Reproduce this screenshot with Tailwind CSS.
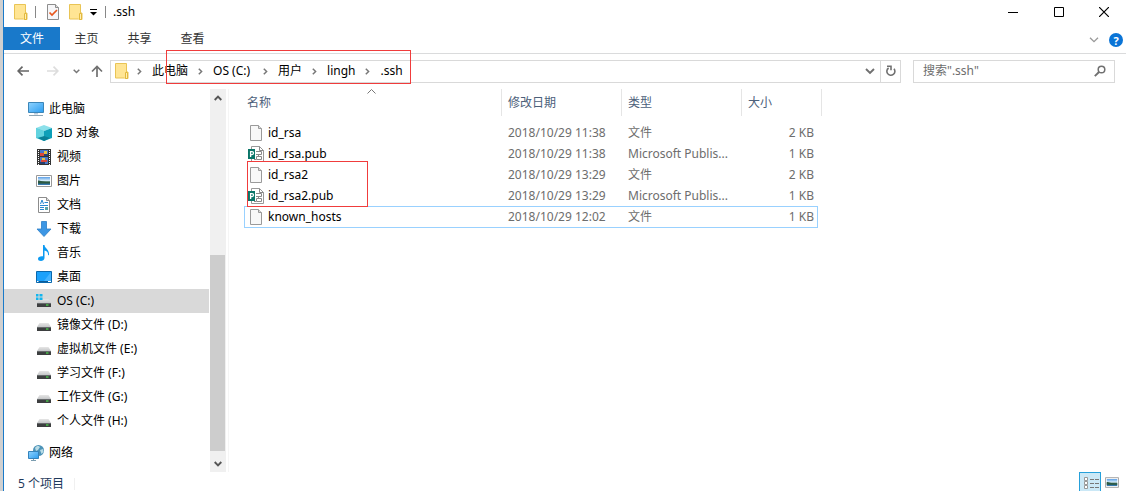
<!DOCTYPE html>
<html lang="zh-CN">
<head>
<meta charset="utf-8">
<title>.ssh</title>
<script src="https://cdn.jsdelivr.net/npm/@tailwindcss/browser@4"></script>
</head>
<body class="bg-white font-['Noto_Sans','Noto_Sans_CJK_SC',sans-serif] text-xs text-black">
<svg class="absolute size-0" aria-hidden="true">
  <linearGradient id="metal" x1="0" y1="0" x2="0" y2="1"><stop offset="0" stop-color="#e6e6e6"/><stop offset="1" stop-color="#c4c6c8"/></linearGradient>
  <linearGradient id="screen" x1="0" y1="0" x2="1" y2="1"><stop offset="0" stop-color="#8fd3ff"/><stop offset="1" stop-color="#2b9df0"/></linearGradient>
  <linearGradient id="sky" x1="0" y1="0" x2="0" y2="1"><stop offset="0" stop-color="#5b9ee6"/><stop offset=".45" stop-color="#d5ecfa"/><stop offset=".6" stop-color="#3a6a52"/><stop offset=".8" stop-color="#2d6d8c"/><stop offset="1" stop-color="#3d7fc0"/></linearGradient>
  <symbol id="folder" viewBox="0 0 14 16"><path d="M.5.5h11v8.500h1.500v6.500H10l-.5-.5h-9z" fill="#ffe594" stroke="#e9c455"/><path d="M10.500 9.500h2v6h-2z" fill="#fff0b5" stroke="#e3b93e"/></symbol>
  <symbol id="chev" viewBox="0 0 5 7"><path d="M.8.7 3.600 3.500.8 6.300" fill="none" stroke="#777" stroke-width="1.500"/></symbol>
  <symbol id="drive" viewBox="0 0 16 16"><path d="M3.500 6h9L15 10H1z" fill="url(#metal)"/><path d="M1 10h14v4H1z" fill="#3d3f40"/><path d="M1 10h14v1H1z" fill="#66696b"/><path d="M10 11.500h2.500v1H10z" fill="#4dff4d"/></symbol>
  <symbol id="page" viewBox="0 0 12 16"><path d="M.5.5h8l3 3v12H.5z" fill="#f8f8f8" stroke="#9a9a9a"/><path d="M8.500.5v3h3" fill="#ddd" stroke="#9a9a9a"/></symbol>
  <symbol id="pub" viewBox="0 0 16 16"><path d="M3.500.5h8l4 4v11h-12z" fill="#fff" stroke="#999"/><path d="M11.500.5v4h4M8 5.500h5.500v3H8M10.500 8.500v2M8.500 10.500H13.500v3h-5zM8 13.500H6" fill="none" stroke="#8a8a8a"/><path d="M0 3h7v10H0z" fill="#0a7568"/><path d="M2.600 11V5.600H4a1.300 1.300 0 0 1 0 3H2.600" fill="none" stroke="#fff" stroke-width="1.300"/></symbol>
  <symbol id="photo" viewBox="0 0 16 12"><path d="M.5.5h15v11H.5z" fill="#fff" stroke="#999"/><path d="M2 2h12v8H2z" fill="url(#sky)"/><path d="M2 5.500c3 0 5 2 12 1.500v1.500H2z" fill="#2c5943"/></symbol>
</svg>
<div class="flex min-h-screen border-l-[3px] border-[#d0d0d0]">
<div class="flex min-w-0 flex-1 flex-col border-l border-[#1a7ac9]">
  <header class="flex h-[27px] items-center pb-1 pl-[10px]">
    <svg class="h-4 w-[14px]"><use href="#folder"/></svg>
    <span class="ml-[7px] h-3 w-px bg-[#888]"></span>
    <button aria-label="属性" class="ml-[11px]"><svg class="block h-4 w-3" viewBox="0 0 12 16"><path d="M.5.5h8l3 3v12H.5z" fill="#f6f6f8" stroke="#8d8d8d"/><path d="M8.500.5v3h3" fill="#ddd" stroke="#8d8d8d"/><path d="m2.500 8.500 2.500 2.500 5-5" fill="none" stroke="#e8561c" stroke-width="1.700"/></svg></button>
    <button aria-label="新建文件夹" class="ml-[10px]"><svg class="block h-4 w-[14px]"><use href="#folder"/></svg></button>
    <button aria-label="自定义快速访问工具栏" class="ml-[7px]"><svg class="block h-2 w-[7px]" viewBox="0 0 7 8"><path d="M0 1.500h7" stroke="#000"/><path d="M0 4h7L3.500 7.500z"/></svg></button>
    <span class="ml-2 h-3 w-px bg-[#888]"></span>
    <h1 class="ml-[7px]">.ssh</h1>
    <div class="ml-auto flex h-full pr-[-1px]">
      <button aria-label="最小化" class="flex w-[46px] items-center justify-center"><svg class="h-[10px] w-[10px]" viewBox="0 0 10 10"><path d="M0 5.500h10" stroke="#000"/></svg></button>
      <button aria-label="最大化" class="flex w-[46px] items-center justify-center"><svg class="h-[10px] w-[10px]" viewBox="0 0 10 10"><path d="M.5.5h9v9h-9z" fill="none" stroke="#000"/></svg></button>
      <button aria-label="关闭" class="flex w-11 items-center justify-center"><svg class="h-[10px] w-[10px]" viewBox="0 0 10 10"><path d="m0 0 10 10M10 0 0 10" stroke="#000" stroke-width="1.200"/></svg></button>
    </div>
  </header>
  <nav class="flex h-[27px] items-start border-b border-[#dadbdc] text-[#333]">
    <button class="h-[23px] w-14 bg-[#1979ca] text-white">文件</button>
    <button class="h-6 w-[53px]">主页</button>
    <button class="h-6 w-[53px]">共享</button>
    <button class="h-6 w-[53px]">查看</button>
    <div class="ml-auto flex h-[26px] items-center gap-[10px] pr-[3px]">
      <button aria-label="展开功能区"><svg class="block h-[6px] w-[10px]" viewBox="0 0 10 6"><path d="m1 .7 4 4 4-4" fill="none" stroke="#999" stroke-width="1.300"/></svg></button>
      <button aria-label="帮助" class="flex size-[14px] items-center justify-center rounded-full bg-[#0a74d6] text-[11px] leading-none font-bold text-white">?</button>
    </div>
  </nav>
  <div class="relative flex h-[35px] items-center pr-[11px] pb-px pl-[13px]">
    <button aria-label="后退"><svg class="block h-[10px] w-3" viewBox="0 0 12 10"><path d="M12 5H1.500M5.500.7 1.200 5l4.300 4.300" fill="none" stroke="#666" stroke-width="1.700"/></svg></button>
    <button aria-label="前进" class="ml-[18px]"><svg class="block h-[10px] w-3" viewBox="0 0 12 10"><path d="M0 5h10.500M6.500.7 10.800 5 6.500 9.300" fill="none" stroke="#ddd" stroke-width="1.700"/></svg></button>
    <button aria-label="最近位置" class="ml-[14px]"><svg class="block h-[5px] w-[7px]" viewBox="0 0 7 5"><path d="m.7.7 2.800 2.800L6.300.7" fill="none" stroke="#777" stroke-width="1.500"/></svg></button>
    <button aria-label="向上" class="ml-[11px]"><svg class="block h-3 w-3" viewBox="0 0 12 12"><path d="M6 12V1.500M1 6.500 6 1.500l5 5" fill="none" stroke="#707070" stroke-width="1.700"/></svg></button>
    <div class="ml-[7px] flex h-[23px] min-w-0 flex-1 items-center border border-[#d9d9d9] pl-1">
      <svg class="h-4 w-[14px]"><use href="#folder"/></svg>
      <svg class="ml-2 h-[7px] w-[5px]"><use href="#chev"/></svg>
      <a href="#" class="ml-[10px]">此电脑</a>
      <svg class="mx-[10px] h-[7px] w-[5px]"><use href="#chev"/></svg>
      <a href="#" class="min-w-10">OS (C:)</a>
      <svg class="mx-[10px] h-[7px] w-[5px]"><use href="#chev"/></svg>
      <a href="#">用户</a>
      <svg class="mx-[10px] h-[7px] w-[5px]"><use href="#chev"/></svg>
      <a href="#">lingh</a>
      <svg class="mx-[10px] h-[7px] w-[5px]"><use href="#chev"/></svg>
      <a href="#">.ssh</a>
      <button aria-label="历史" class="ml-auto flex h-full w-5 items-center justify-center"><svg class="h-[7px] w-[10px]" viewBox="0 0 10 7"><path d="m1 1 4 4 4-4" fill="none" stroke="#707070" stroke-width="1.900"/></svg></button>
      <button aria-label="刷新" class="flex h-full w-5 items-center justify-center border-l border-[#d9d9d9]"><svg class="h-3 w-[10px]" viewBox="0 0 10 12"><path d="M2.600 3A4 4 0 1 0 8 3.800M1 1.300h4v4" fill="none" stroke="#707070" stroke-width="1.600"/></svg></button>
    </div>
    <label class="ml-3 flex h-[23px] w-[202px] items-center border border-[#d9d9d9] pr-2 pl-[9px]">
      <input type="search" aria-label="搜索" placeholder='搜索".ssh"' class="min-w-0 flex-1 outline-none placeholder:text-[#6d6d6d]">
      <svg class="h-3 w-3" viewBox="0 0 12 12"><circle cx="7.500" cy="4.500" r="3.300" fill="none" stroke="#707070" stroke-width="1.500"/><path d="M5 7 .8 11.200" stroke="#707070" stroke-width="1.900"/></svg>
    </label>
    <div class="absolute -top-1 left-[162px] h-[34px] w-[245px] border border-[#f03c3c]"></div>
  </div>
  <main class="flex flex-1">
    <aside class="w-[205px] shrink-0 pt-2">
      <ul class="leading-6 *:flex *:h-6 *:items-center *:gap-[5px] *:pl-8">
        <li class="pl-6!"><svg class="size-4" viewBox="0 0 16 16"><path d="M.5 1.500h15v10H.5z" fill="url(#screen)" stroke="#3c86b8"/><path d="M6 12h4v1.500H6z" fill="#bcd"/><path d="M1 14.500h14" stroke="#8ea6b5"/></svg><a href="#">此电脑</a></li>
        <li><svg class="size-4" viewBox="0 0 16 16"><path d="m0 3 8-3 8 3-8 3z" fill="#8ce0ea"/><path d="m0 3 8 3v10l-8-3z" fill="#36b9cb"/><path d="m16 3-8 3v10l8-3z" fill="#0d9fb8"/><path d="m2 13 6-2 6 2-6 3z" fill="#087f96"/><path d="m0 3 8 3v5l-8 2z" fill="#62d3df"/></svg><a href="#">3D 对象</a></li>
        <li><svg class="size-4" viewBox="0 0 16 16"><path d="M1 0h14v16H1z" fill="#333"/><path d="M4 1h8v6H4zM4 8h8v7H4z" fill="#4877c8"/><path d="M4 4h4v3H4zM5 11h6v2H5z" fill="#d9483b"/><path d="M8 2h3v3H8zM6 9h3v2H6z" fill="#e6c342"/><path d="M8 5h4v2H8zM4 13h5v2H4z" fill="#263f70"/><path d="M2.500 1v15M13.500 1v15" stroke="#fff" stroke-dasharray="1 1"/></svg><a href="#">视频</a></li>
        <li><svg class="h-3 w-4"><use href="#photo"/></svg><a href="#">图片</a></li>
        <li><svg class="size-4" viewBox="0 0 16 16"><path d="M2.500.5h8l3 3v12h-11z" fill="#fff" stroke="#8c8c8c"/><path d="M10.500.5v3h3" fill="#ddd" stroke="#8c8c8c"/><path d="m4.500 7 1.500-4 1.500 4M8.500 5.500H12M4 8.500h8M4 10.500h4M4 12.500h4" fill="none" stroke="#2a88d0"/><path d="M9 10h3v3H9z" fill="#58a3a8"/></svg><a href="#">文档</a></li>
        <li><svg class="size-4" viewBox="0 0 16 16"><path d="M5.500.5h5V8h4.500l-7 7.500L1 8h4.500z" fill="#3c96e4" stroke="#2b7fc8" stroke-width=".8"/></svg><a href="#">下载</a></li>
        <li><svg class="size-4" viewBox="0 0 16 16"><path d="M7 0h1.500c.3 3.500 5 4.500 4.500 10-.6.5-1 0-1-.5.200-2-1.200-3.500-3.500-4v7.500C8.500 15 6.500 16 5 16c-2 0-3-1-3-2.300C2 12 4 11 7 11.300z" fill="#0c9af2"/></svg><a href="#">音乐</a></li>
        <li><svg class="size-4" viewBox="0 0 16 16"><path d="M.5 2.500h15v11H.5z" fill="#1ba1fb" stroke="#0a68ad"/><path d="M8 12 15 3v9z" fill="#43b3ff"/><path d="M1 12.500h14" stroke="#0c5c99"/><path d="M1 12.500h1.500M12 12.500h3" stroke="#fff"/></svg><a href="#">桌面</a></li>
        <li class="bg-[#d9d9d9]" aria-current="true"><svg class="size-4" viewBox="0 0 16 16"><path d="M6 6h6.500L15 10H1l1.500-2.500H6z" fill="url(#metal)"/><path d="M1 10h14v4H1z" fill="#3d3f40"/><path d="M1 10h14v1H1z" fill="#66696b"/><path d="M10 11.500h2.500v1H10z" fill="#4dff4d"/><path d="M0 1h2.500v2.500H0zM3.500 1h3v2.500h-3zM0 4.500h2.500V7H0zM3.500 4.500h3V7h-3z" fill="#13b5ee"/></svg><a href="#">OS (C:)</a></li>
        <li><svg class="size-4"><use href="#drive"/></svg><a href="#">镜像文件 (D:)</a></li>
        <li><svg class="size-4"><use href="#drive"/></svg><a href="#">虚拟机文件 (E:)</a></li>
        <li><svg class="size-4"><use href="#drive"/></svg><a href="#">学习文件 (F:)</a></li>
        <li><svg class="size-4"><use href="#drive"/></svg><a href="#">工作文件 (G:)</a></li>
        <li><svg class="size-4"><use href="#drive"/></svg><a href="#">个人文件 (H:)</a></li>
        <li class="mt-2 pl-6!"><svg class="size-4" viewBox="0 0 16 16"><circle cx="10.500" cy="5.500" r="5.500" fill="#4d93b8"/><path d="M7 3c2-3 4-2 5-1l-2 3-2 1zM12 5l3-1 .5 3-2 2z" fill="#b9dce6"/><path d="M.5 6.500h10v7H.5z" fill="url(#screen)" stroke="#3483bb"/><path d="M3 15.500h5M5.500 14v1" stroke="#7c9db0"/></svg><a href="#">网络</a></li>
      </ul>
    </aside>
    <div class="ml-px flex w-4 shrink-0 flex-col bg-[#f0f0f0]">
      <button aria-label="向上滚动" class="flex h-[18px] items-center justify-center"><svg class="h-[6px] w-2" viewBox="0 0 8 6"><path d="m.7 5 3.300-3.300L7.300 5" fill="none" stroke="#555" stroke-width="1.900"/></svg></button>
      <div class="flex-1"></div>
      <div class="mr-px h-[196px] bg-[#cdcdcd]"></div>
      <button aria-label="向下滚动" class="flex h-[21px] items-center justify-center pt-1"><svg class="h-[6px] w-2" viewBox="0 0 8 6"><path d="m.7 1 3.300 3.300L7.300 1" fill="none" stroke="#555" stroke-width="1.900"/></svg></button>
    </div>
    <section class="ml-[2px] min-w-0 flex-1 border-l border-[#f5f5f5] pl-[15px]">
      <div class="relative w-[574px]">
        <table class="w-full table-fixed border-separate border-spacing-0 text-[#6d6d6d]">
          <colgroup><col><col class="w-[120px]"><col class="w-[120px]"><col class="w-[76px]"></colgroup>
          <thead class="text-left text-[#4c607a] *:*:h-[27px] *:*:font-normal">
            <tr>
              <th class="relative border-r border-[#e5e5e5] pl-[3px]" aria-sort="ascending">名称<svg class="absolute top-0 left-[123px] h-[5px] w-[9px]" viewBox="0 0 9 5"><path d="m.5 4.500 4-4 4 4" fill="none" stroke="#777"/></svg></th>
              <th class="border-r border-[#e5e5e5] pl-[6px]">修改日期</th>
              <th class="border-r border-[#e5e5e5] pl-[6px]">类型</th>
              <th class="relative pl-[6px]">大小<span class="absolute inset-y-0 -right-1 w-px bg-[#e5e5e5]"></span></th>
            </tr>
            <tr aria-hidden="true"><td class="h-[6px]!" colspan="4"></td></tr>
          </thead>
          <tbody class="*:*:h-[21px] *:*:p-0 *:*:pl-[6px]! *:*:leading-5 *:*:last:pr-1 *:*:last:text-right">
            <tr><td><a href="#" class="flex items-center text-black"><svg class="mr-[6px] h-4 w-3"><use href="#page"/></svg>id_rsa</a></td><td>2018/10/29 11:38</td><td>文件</td><td>2 KB</td></tr>
            <tr><td><a href="#" class="-ml-[2px] flex items-center text-black"><svg class="mr-1 size-4"><use href="#pub"/></svg>id_rsa.pub</a></td><td>2018/10/29 11:38</td><td>Microsoft Publis...</td><td>1 KB</td></tr>
            <tr><td><a href="#" class="flex items-center text-black"><svg class="mr-[6px] h-4 w-3"><use href="#page"/></svg>id_rsa2</a></td><td>2018/10/29 13:29</td><td>文件</td><td>2 KB</td></tr>
            <tr><td><a href="#" class="-ml-[2px] flex items-center text-black"><svg class="mr-1 size-4"><use href="#pub"/></svg>id_rsa2.pub</a></td><td>2018/10/29 13:29</td><td>Microsoft Publis...</td><td>1 KB</td></tr>
            <tr class="outline -outline-offset-1 outline-[#99d1ff] *:h-[22px]!"><td><a href="#" class="flex items-center text-black"><svg class="mr-[6px] h-4 w-3"><use href="#page"/></svg>known_hosts</a></td><td>2018/10/29 12:02</td><td>文件</td><td>1 KB</td></tr>
          </tbody>
        </table>
        <div class="absolute top-[72px] left-[3px] h-[46px] w-[121px] border border-[#f03c3c]"></div>
      </div>
    </section>
  </main>
  <footer class="flex h-[19px] items-center pl-[14px] text-[#1e395b]">
    <span class="pt-1">5 个项目</span>
    <span class="mt-1 ml-[10px] h-3 w-px bg-[#f0f0f0]"></span>
    <div class="ml-auto flex items-start gap-1 self-stretch overflow-hidden pr-[7px]">
      <button aria-label="详细信息" class="h-[22px] w-[22px] border border-[#26a0da] bg-[#cbe8f6]"><svg class="block size-5" viewBox="0 0 20 20"><path d="M4.500 4.500h3v3h-3zM4.500 8.500h3v3h-3zM4.500 12.500h3v3h-3z" fill="#fff" stroke="#999"/><path d="M10 6.500h4M15 6.500h4M10 10.500h4M15 10.500h4M10 14.500h4M15 14.500h4" stroke="#777"/></svg></button>
      <button aria-label="大图标" class="pt-[5px]"><svg class="block h-[11px] w-[14px]"><use href="#photo"/></svg></button>
    </div>
  </footer>
</div>
</div>
</body>
</html>
